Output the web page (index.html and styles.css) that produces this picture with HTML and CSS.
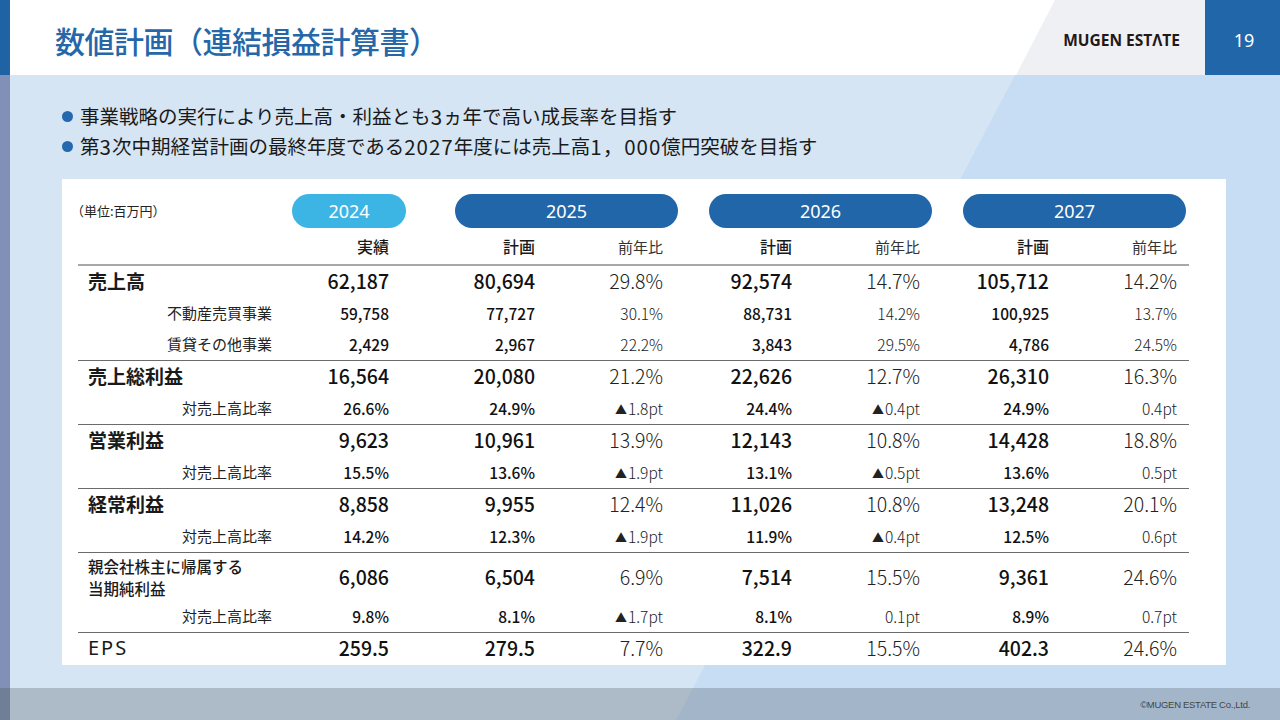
FILE: index.html
```html
<!DOCTYPE html>
<html lang="ja">
<head>
<meta charset="utf-8">
<title>数値計画（連結損益計算書）</title>
<link rel="stylesheet" href="styles.css">
</head>
<body>
<div class="slide">
  <header class="topbar">
    <h1 class="title">数値計画（連結損益計算書）</h1>
    <div class="brand">MUGEN EST<span class="lam">Λ</span>TE</div>
    <div class="pageno">19</div>
  </header>

  <main class="content">
    <ul class="points">
      <li>事業戦略の実行により売上高・利益とも<span class="num">3</span>ヵ年で高い成長率を目指す</li>
      <li>第<span class="num">3</span>次中期経営計画の最終年度である<span class="num">2027</span>年度には売上高<span class="num">1，000</span>億円突破を目指す</li>
    </ul>

    <section class="card">
      <div class="years">
        <span class="unit">（単位:百万円）</span>
        <span class="pill pill-actual">2024</span>
        <span class="pill pill-plan pill-first">2025</span>
        <span class="pill pill-plan">2026</span>
        <span class="pill pill-plan">2027</span>
      </div>

      <div class="row head">
        <span></span>
        <span class="h-strong">実績</span>
        <span class="h-strong">計画</span><span class="h-light">前年比</span>
        <span class="h-strong">計画</span><span class="h-light">前年比</span>
        <span class="h-strong">計画</span><span class="h-light">前年比</span>
      </div>

      <div class="group">
        <div class="row main">
          <span class="lbl">売上高</span>
          <span class="v">62,187</span>
          <span class="v">80,694</span><span class="r">29.8%</span>
          <span class="v">92,574</span><span class="r">14.7%</span>
          <span class="v">105,712</span><span class="r">14.2%</span>
        </div>
        <div class="row sub">
          <span class="lbl">不動産売買事業</span>
          <span class="v">59,758</span>
          <span class="v">77,727</span><span class="r">30.1%</span>
          <span class="v">88,731</span><span class="r">14.2%</span>
          <span class="v">100,925</span><span class="r">13.7%</span>
        </div>
        <div class="row sub">
          <span class="lbl">賃貸その他事業</span>
          <span class="v">2,429</span>
          <span class="v">2,967</span><span class="r">22.2%</span>
          <span class="v">3,843</span><span class="r">29.5%</span>
          <span class="v">4,786</span><span class="r">24.5%</span>
        </div>
      </div>

      <div class="group">
        <div class="row main">
          <span class="lbl">売上総利益</span>
          <span class="v">16,564</span>
          <span class="v">20,080</span><span class="r">21.2%</span>
          <span class="v">22,626</span><span class="r">12.7%</span>
          <span class="v">26,310</span><span class="r">16.3%</span>
        </div>
        <div class="row sub">
          <span class="lbl">対売上高比率</span>
          <span class="v">26.6%</span>
          <span class="v">24.9%</span><span class="r"><span class="tri">▲</span>1.8pt</span>
          <span class="v">24.4%</span><span class="r"><span class="tri">▲</span>0.4pt</span>
          <span class="v">24.9%</span><span class="r">0.4pt</span>
        </div>
      </div>

      <div class="group">
        <div class="row main">
          <span class="lbl">営業利益</span>
          <span class="v">9,623</span>
          <span class="v">10,961</span><span class="r">13.9%</span>
          <span class="v">12,143</span><span class="r">10.8%</span>
          <span class="v">14,428</span><span class="r">18.8%</span>
        </div>
        <div class="row sub">
          <span class="lbl">対売上高比率</span>
          <span class="v">15.5%</span>
          <span class="v">13.6%</span><span class="r"><span class="tri">▲</span>1.9pt</span>
          <span class="v">13.1%</span><span class="r"><span class="tri">▲</span>0.5pt</span>
          <span class="v">13.6%</span><span class="r">0.5pt</span>
        </div>
      </div>

      <div class="group">
        <div class="row main">
          <span class="lbl">経常利益</span>
          <span class="v">8,858</span>
          <span class="v">9,955</span><span class="r">12.4%</span>
          <span class="v">11,026</span><span class="r">10.8%</span>
          <span class="v">13,248</span><span class="r">20.1%</span>
        </div>
        <div class="row sub">
          <span class="lbl">対売上高比率</span>
          <span class="v">14.2%</span>
          <span class="v">12.3%</span><span class="r"><span class="tri">▲</span>1.9pt</span>
          <span class="v">11.9%</span><span class="r"><span class="tri">▲</span>0.4pt</span>
          <span class="v">12.5%</span><span class="r">0.6pt</span>
        </div>
      </div>

      <div class="group">
        <div class="row main tall">
          <span class="lbl lbl-two">親会社株主に帰属する<br>当期純利益</span>
          <span class="v">6,086</span>
          <span class="v">6,504</span><span class="r">6.9%</span>
          <span class="v">7,514</span><span class="r">15.5%</span>
          <span class="v">9,361</span><span class="r">24.6%</span>
        </div>
        <div class="row sub">
          <span class="lbl">対売上高比率</span>
          <span class="v">9.8%</span>
          <span class="v">8.1%</span><span class="r"><span class="tri">▲</span>1.7pt</span>
          <span class="v">8.1%</span><span class="r">0.1pt</span>
          <span class="v">8.9%</span><span class="r">0.7pt</span>
        </div>
      </div>

      <div class="group last">
        <div class="row main eps">
          <span class="lbl lbl-eps">EPS</span>
          <span class="v">259.5</span>
          <span class="v">279.5</span><span class="r">7.7%</span>
          <span class="v">322.9</span><span class="r">15.5%</span>
          <span class="v">402.3</span><span class="r">24.6%</span>
        </div>
      </div>
    </section>
  </main>

  <footer class="foot">
    <span class="copy">©MUGEN ESTATE Co.,Ltd.</span>
  </footer>
</div>
</body>
</html>
```

FILE: styles.css
```css
* { box-sizing: border-box; }

html, body {
  margin: 0;
  padding: 0;
}

body {
  width: 1280px;
  height: 720px;
  overflow: hidden;
  font-family: "Noto Sans CJK JP", "Noto Sans", sans-serif;
  color: #1a1a1a;
}

.slide {
  width: 1280px;
  height: 720px;
  display: flex;
  flex-direction: column;
}

/* ---------- header ---------- */
.topbar {
  position: relative;
  height: 75px;
  flex: none;
  display: flex;
  align-items: center;
  background: #ffffff;
  border-left: 10px solid #1f63a5;
}

.topbar::before {
  content: "";
  position: absolute;
  inset: 0;
  background: #eff0f4;
  clip-path: polygon(1045px 0, 100% 0, 100% 100%, 1006px 100%);
}

.topbar > * { position: relative; }

.title {
  margin: 0;
  padding-left: 45px;
  font-size: 30px;
  font-weight: 500;
  color: #2567a8;
  letter-spacing: -0.5px;
  line-height: 1;
  align-self: stretch;
  display: flex;
  align-items: center;
  padding-top: 12px;
  padding-bottom: 8px;
}

.brand {
  margin-left: auto;
  padding-right: 25px;
  font-family: "Open Sans", "Noto Sans", sans-serif;
  font-weight: 700;
  font-size: 15.5px;
  color: #231815;
  padding-top: 5px;
}

.pageno {
  width: 75px;
  height: 75px;
  background: #2166a9;
  color: #ffffff;
  font-family: "Noto Sans", sans-serif;
  font-size: 18px;
  display: flex;
  align-items: center;
  justify-content: center;
  padding-top: 5px;
  padding-left: 3px;
}

/* ---------- content ---------- */
.content {
  position: relative;
  flex: 1;
  background: #d5e5f4;
  border-left: 10px solid #8090b6;
  padding: 26px 54px 0 52px;
}

.content::before {
  content: "";
  position: absolute;
  inset: 0;
  background: #c6ddf3;
  clip-path: polygon(1005px 0, 100% 0, 100% 100%, 683px 100%);
}

.content > * { position: relative; }

.points {
  list-style: none;
  margin: 0;
  padding: 0;
  font-size: 19.5px;
  line-height: 30px;
  color: #1a1a1a;
}

.points li {
  display: flex;
  align-items: center;
}

.points li::before {
  content: "";
  width: 11px;
  height: 11px;
  border-radius: 50%;
  background: #2568ad;
  margin-right: 7px;
  flex: none;
}

.points .num {
  font-size: 20.5px;
  letter-spacing: 1px;
}

/* ---------- card / table ---------- */
.card {
  margin-top: 18px;
  background: #ffffff;
  padding: 15px 37px 0 16px;
  height: 486px;
}

.years {
  display: flex;
  align-items: center;
  height: 34px;
}

.unit {
  width: 214px;
  font-size: 13px;
  color: #222;
  margin-left: -7px;
  margin-top: -2px;
  flex: none;
}

.pill {
  height: 34px;
  border-radius: 17px;
  color: #ffffff;
  font-family: "Noto Sans", sans-serif;
  font-size: 18px;
  display: flex;
  align-items: center;
  justify-content: center;
  flex: none;
}

.pill-actual {
  width: 114px;
  margin-left: 7px;
  background: #3db5e4;
}

.pill-plan {
  width: 223px;
  margin-left: 31px;
  background: #2166a9;
}

.pill-first { margin-left: 49px; }

.row {
  display: grid;
  grid-template-columns: 194px 117px 146px 128px 129px 128px 129px 128px;
  align-items: center;
  padding-right: 12px;
}

.row > span:not(.lbl) { text-align: right; white-space: nowrap; }

.head {
  height: 38px;
  border-bottom: 2px solid #a8a8a8;
}

.h-strong {
  font-size: 16px;
  font-weight: 500;
  color: #1a1a1a;
}

.h-light {
  font-size: 15px;
  font-weight: 400;
  color: #333;
}

.group {
  border-bottom: 1px solid #6b6b6b;
}

.group.last { border-bottom: none; }

.main { height: 32px; padding-bottom: 3px; }
.main.tall { height: 48px; padding-bottom: 1px; }
.main.eps { height: 32px; }
.sub { height: 31px; padding-bottom: 2px; }

.main .lbl {
  padding-left: 10px;
  font-size: 19px;
  font-weight: 700;
}

.main .lbl-two {
  font-size: 15.5px;
  line-height: 22px;
  font-weight: 500;
}

.main .lbl-eps {
  font-family: "Noto Sans", sans-serif;
  font-weight: 400;
  font-size: 20px;
  letter-spacing: 2px;
}

.sub .lbl {
  text-align: right;
  font-size: 15px;
  font-weight: 400;
  color: #222;
}

.main .v {
  font-size: 19.5px;
  font-weight: 500;
  color: #111;
}

.main .r {
  font-size: 19.5px;
  font-weight: 300;
  color: #222;
}

.sub .v {
  font-size: 15.5px;
  font-weight: 500;
  color: #111;
}

.sub .r {
  font-size: 15.5px;
  font-weight: 300;
  color: #222;
}

.tri {
  font-size: 12px;
  margin-right: 1px;
}

/* ---------- footer ---------- */
.foot {
  position: relative;
  height: 32px;
  flex: none;
  background: #adbbc8;
  border-left: 10px solid #707e97;
  display: flex;
  align-items: center;
  justify-content: flex-end;
  padding-right: 30px;
}

.foot::before {
  content: "";
  position: absolute;
  inset: 0;
  background: #a3b6c9;
  clip-path: polygon(683px 0, 100% 0, 100% 100%, 666px 100%);
}

.copy {
  position: relative;
  font-family: "Liberation Sans", sans-serif;
  font-size: 9.5px;
  color: #444;
  letter-spacing: -0.3px;
}
```
